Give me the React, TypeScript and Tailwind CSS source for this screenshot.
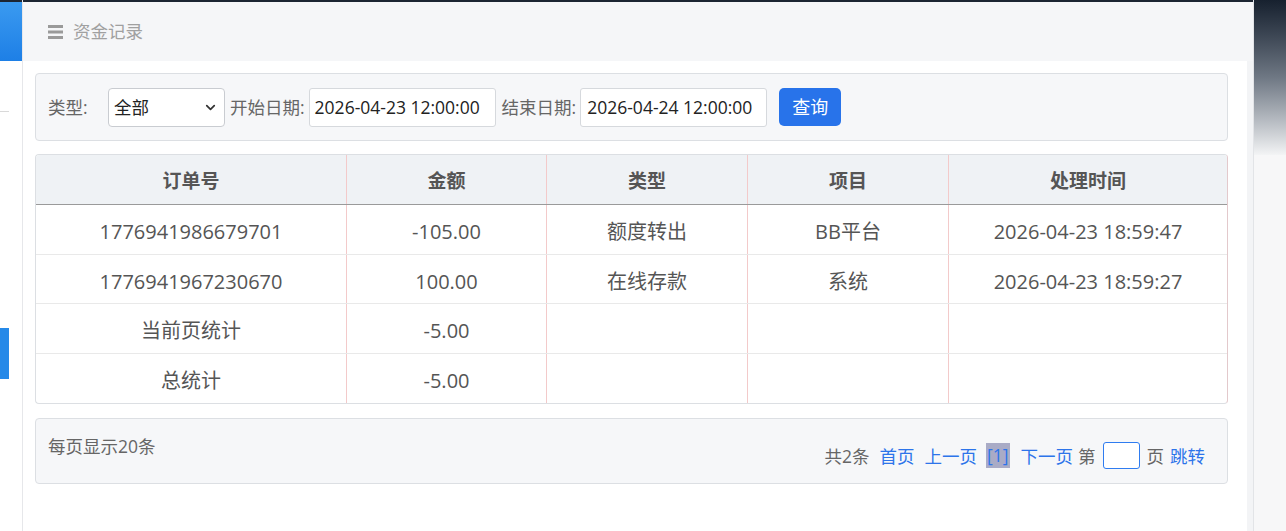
import React from 'react';
import { ChevronDown } from 'lucide-react';

const font = { fontFamily: '"Open Sans", "Noto Sans CJK SC", sans-serif' };

const cols = 'grid grid-cols-[311px_200px_201px_201px_1fr]';

const rows = [
  ['1776941986679701', '-105.00', '额度转出', 'BB平台', '2026-04-23 18:59:47'],
  ['1776941967230670', '100.00', '在线存款', '系统', '2026-04-23 18:59:27'],
  ['当前页统计', '-5.00', '', '', ''],
  ['总统计', '-5.00', '', '', ''],
];

function Sidebar() {
  return (
    <div className="w-[23px] shrink-0 flex flex-col border-r border-[#e6e7ea] bg-white">
      <div className="h-[2px] bg-[#1c2532]" />
      <div className="h-[59px] bg-gradient-to-b from-[#3a9af0] to-[#1d7fe6]" />
      <div className="h-[50px]" />
      <div className="h-px w-[9px] bg-[#d9d9d9]" />
      <div className="h-[216px]" />
      <div className="h-[51px] w-[9px] bg-[#2589e8]" />
    </div>
  );
}

function FilterBar() {
  return (
    <div className="h-[68px] flex items-center px-[12px] rounded-[4px] border border-[#dcdfe3] bg-[#f6f7f9] text-[17.5px] text-[#666]">
      <span className="w-[60px]">类型:</span>
      <div className="w-[117px] h-[39px] flex items-center justify-between pl-[5px] pr-[6px] rounded-[4px] border border-[#c9ccd1] bg-white text-[#222]">
        <span>全部</span>
        <ChevronDown size={15} strokeWidth={2.8} className="text-[#333]" />
      </div>
      <span className="ml-[5px]">开始日期:</span>
      <div className="ml-[4px] w-[187px] h-[39px] flex items-center pl-[5px] rounded-[3px] border border-[#d6d9dd] bg-white text-[#222] text-[17.5px]">
        2026-04-23 12:00:00
      </div>
      <span className="ml-[6px]">结束日期:</span>
      <div className="ml-[4px] w-[187px] h-[39px] flex items-center pl-[6px] rounded-[3px] border border-[#d6d9dd] bg-white text-[#222] text-[17.5px]">
        2026-04-24 12:00:00
      </div>
      <button className="ml-[12px] w-[62px] h-[38px] rounded-[5px] bg-[#2873ea] text-white text-[18px]">
        查询
      </button>
    </div>
  );
}

function Table() {
  const head = ['订单号', '金额', '类型', '项目', '处理时间'];
  return (
    <div className="mt-[13px] rounded-[4px] border border-[#dcdfe3] border-r-[#e3c9cc] overflow-hidden">
      <div className={`${cols} h-[50px] bg-[#eff2f5] border-b border-[#9a9a9a]`}>
        {head.map((h, i) => (
          <div
            key={h}
            className={`flex items-center justify-center pt-[3px] text-[19px] font-bold text-[#555] ${i < 4 ? 'border-r border-[#f3caca]' : ''}`}
          >
            {h}
          </div>
        ))}
      </div>
      {rows.map((r, ri) => (
        <div key={ri} className={`${cols} h-[49.5px] ${ri < 3 ? 'border-b border-[#e9e9e9]' : ''}`}>
          {r.map((c, i) => (
            <div
              key={i}
              className={`flex items-center justify-center pt-[6px] text-[20px] text-[#555] ${i < 4 ? 'border-r border-[#f3caca]' : ''}`}
            >
              {c}
            </div>
          ))}
        </div>
      ))}
    </div>
  );
}

function Pager() {
  return (
    <div className="mt-[14px] h-[66px] flex justify-between rounded-[4px] border border-[#dcdfe3] bg-[#f6f7f9] text-[17.5px] text-[#666] pl-[12px] pr-[22px]">
      <div className="pt-[14px]">每页显示20条</div>
      <div className="pt-[24px] flex items-start">
        <span>共2条</span>
        <a className="ml-[10px] text-[#2d74ea]">首页</a>
        <a className="ml-[10px] text-[#2d74ea]">上一页</a>
        <span className="ml-[9px] px-[1px] h-[25px] flex items-center bg-[#a9abc6] text-[#2d74ea]">[1]</span>
        <a className="ml-[11px] text-[#2d74ea]">下一页</a>
        <span className="ml-[5px]">第</span>
        <div className="ml-[7px] -mt-[1px] w-[37px] h-[27px] rounded-[3px] border border-[#2f7cf0] bg-white" />
        <span className="ml-[7px]">页</span>
        <a className="ml-[6px] text-[#2d74ea]">跳转</a>
      </div>
    </div>
  );
}

export default function App() {
  return (
    <div className="w-[1286px] h-[531px] flex overflow-hidden bg-white" style={font}>
      <Sidebar />
      <div className="w-[1231px] shrink-0 flex flex-col border-r border-[#e2e4e7]">
        <div className="h-[2px] bg-[#1c2532]" />
        <div className="h-[59px] flex items-center pl-[25px] bg-[#f5f6f8] text-[17.5px] text-[#a0a0a0]">
          <svg width="15" height="14" viewBox="0 0 15 14" className="mr-[10px]">
            <rect x="0" y="0" width="15" height="3" fill="#9a9a9a" />
            <rect x="0" y="5.5" width="15" height="3" fill="#9a9a9a" />
            <rect x="0" y="11" width="15" height="3" fill="#9a9a9a" />
          </svg>
          <span>资金记录</span>
        </div>
        <div className="flex-1 flex">
          <div className="flex-1 bg-white pl-[12px] pr-[19px] pt-[12px]">
            <FilterBar />
            <Table />
            <Pager />
          </div>
          <div className="w-[6px] bg-[#f3f4f6]" />
        </div>
      </div>
      <div className="flex-1 flex flex-col bg-[#f7f7f8]">
        <div className="h-[155px] bg-gradient-to-b from-[#17212f] via-[#6f7884] to-[#f3f4f5]" />
      </div>
    </div>
  );
}
